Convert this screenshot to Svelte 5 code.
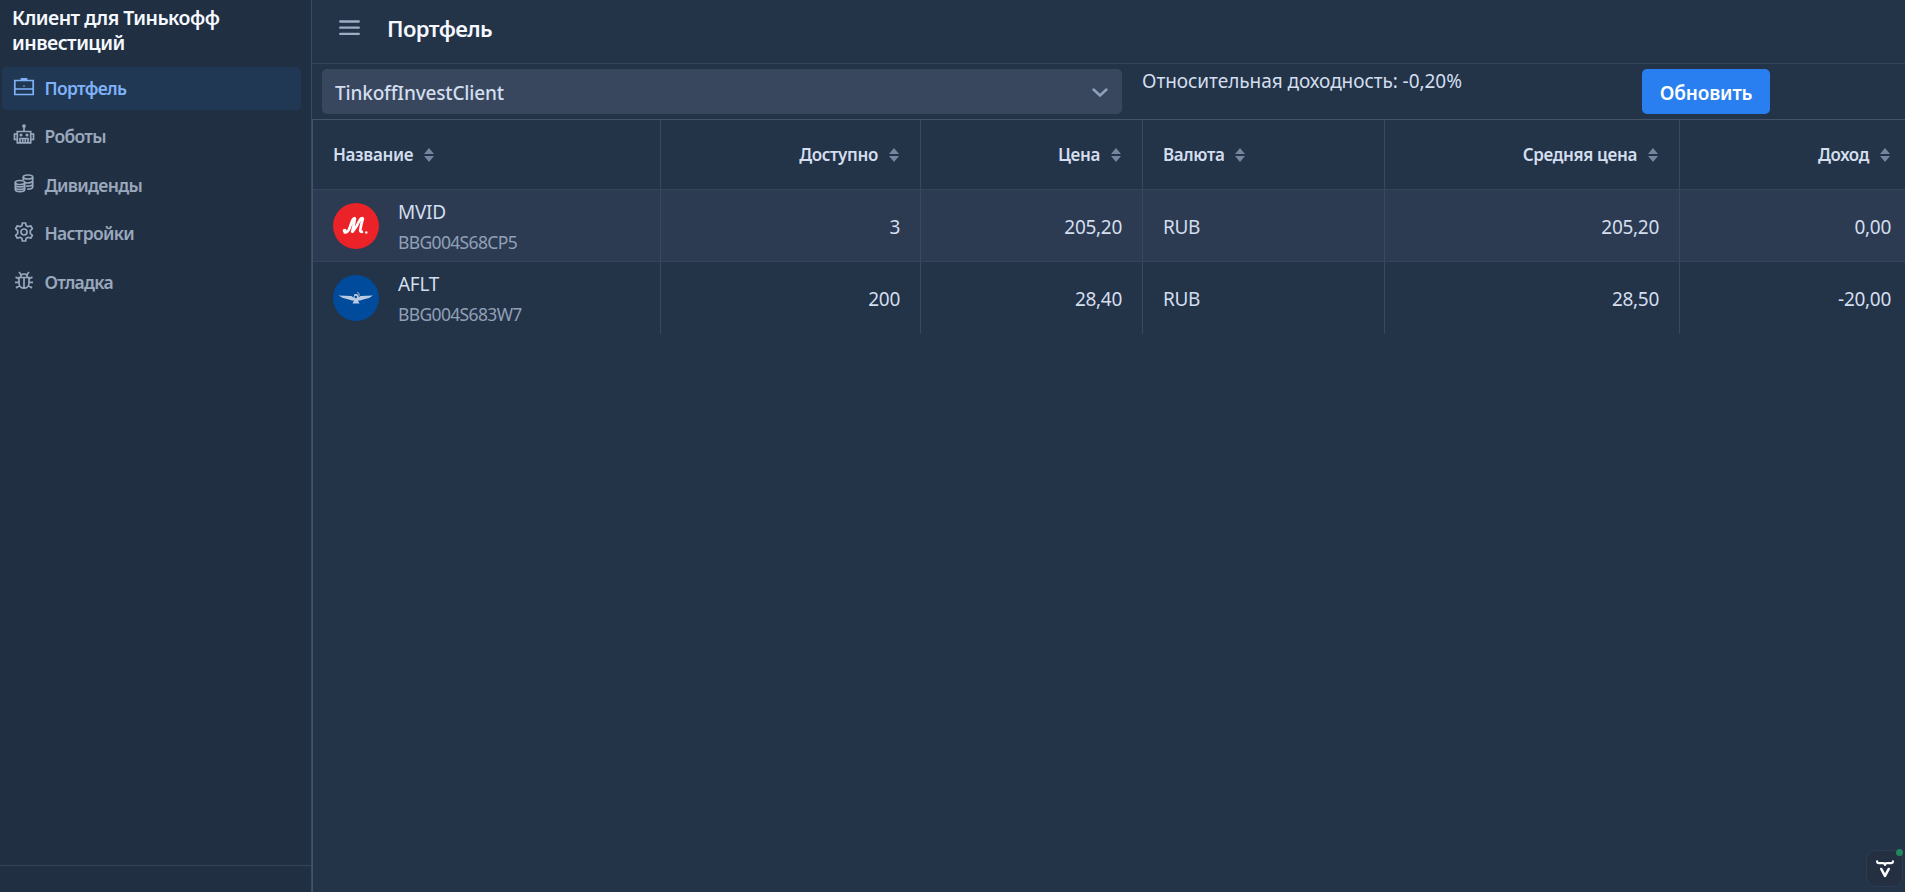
<script>
  const nav = [
    { label: 'Портфель', icon: 'case' },
    { label: 'Роботы', icon: 'robot' },
    { label: 'Дивиденды', icon: 'coins' },
    { label: 'Настройки', icon: 'cog' },
    { label: 'Отладка', icon: 'bug' },
  ];
  const columns = [
    { title: 'Название' },
    { title: 'Доступно', end: true },
    { title: 'Цена', end: true },
    { title: 'Валюта' },
    { title: 'Средняя цена', end: true },
    { title: 'Доход', end: true },
  ];
  const rows = [
    { name: 'MVID', figi: 'BBG004S68CP5', logo: 'mvid', cells: ['3', '205,20', 'RUB', '205,20', '0,00'] },
    { name: 'AFLT', figi: 'BBG004S683W7', logo: 'aflt', cells: ['200', '28,40', 'RUB', '28,50', '-20,00'] },
  ];
</script>

<div class="app">
  <aside>
    <h1>Клиент для Тинькофф<br />инвестиций</h1>
    <nav>
      {#each nav as item, i}
        <a class:active={i === 0}>
          <svg width="22" height="22" viewBox="0 0 22 22" fill="none" stroke="currentColor" stroke-width="1.7">
            {#if item.icon === 'case'}
              <path d="M1.800 4.500h18.400v14H1.800zM1.800 13h18.400M8.500 4V2.800h5V4M10.500 10.200h1" />
            {:else if item.icon === 'robot'}
              <path d="M4.300 7.500h13.400v11.300H4.300zM3.800 10H1.500v5.500h2.300M18.200 10h2.300v5.500h-2.300M11 7V3M7 18.500v-4h8v4M9.700 15v3.500M12.300 15v3.500" />
              <circle cx="11" cy="2" r="1" fill="currentColor" /><circle cx="8" cy="11" r=".7" fill="currentColor" /><circle cx="14" cy="11" r=".7" fill="currentColor" />
            {:else if item.icon === 'coins'}
              <ellipse cx="15" cy="4" rx="4.700" ry="2" /><path d="M10.300 4v3M19.700 4v10c0 1.300-2 2.200-5.500 2.200M12 9.700c3.500.8 7.700-.2 7.700-2M13 13c3.500.5 6.700-.4 6.700-2" />
              <ellipse cx="7" cy="9.500" rx="4.700" ry="2" /><path d="M2.300 9.500v7c0 2.800 9.400 2.800 9.400 0v-7M2.300 12c0 2.600 9.400 2.600 9.400 0M2.300 14.500c0 2.600 9.400 2.600 9.400 0" />
            {:else if item.icon === 'cog'}
              <path stroke-linejoin="round" d="M9.400 2h3.200l.5 2.600 1.900 1.100 2.700-.9 1.700 2.900-2.100 1.900v2.800l2.100 1.900-1.700 2.900-2.700-.9-1.900 1.100-.5 2.600H9.400l-.5-2.600-1.900-1.100-2.700.9-1.700-2.900 2.100-1.900V9.600L2.600 7.700l1.700-2.900 2.700.9 1.900-1.100z" /><circle cx="11" cy="11" r="3" />
            {:else}
              <path d="M6 7.500h10v5.500c0 7-10 7-10 0zM7.500 7c.3-4 6.700-4 7 0M11 8v10M6 2l2 2.500M16 2l-2 2.500M6 9L2.500 7M16 9l3.500-2M6 12.300H2M16 12.300h4M6.500 15.500L3 18M15.500 15.500L19 18" />
            {/if}
          </svg>
          <span>{item.label}</span>
        </a>
      {/each}
    </nav>
    <footer></footer>
  </aside>
  <main>
    <header>
      <svg width="21" height="16" viewBox="0 0 21 16"><path d="M1.200 1.500h18.600M1.200 7.700h18.600M1.200 13.900h18.600" stroke="#9cadc5" stroke-width="2.300" stroke-linecap="round" /></svg>
      <h2>Портфель</h2>
    </header>
    <section class="toolbar">
      <div class="select"><span>TinkoffInvestClient</span>
        <svg width="16" height="10" viewBox="0 0 16 10"><path d="M1.500 1.500L8 7.500l6.500-6" fill="none" stroke="#90a1bb" stroke-width="2.400" stroke-linecap="round" /></svg>
      </div>
      <p>Относительная доходность: -0,20%</p>
      <button>Обновить</button>
    </section>
    <div class="grid">
      <div class="row head">
        {#each columns as c}
          <div class="cell" class:end={c.end}><span>{c.title}</span>
            <svg class="sort" width="10" height="14" viewBox="0 0 10 14"><path d="M0 6L5 0l5 6zM0 8h10l-5 6z" fill="#74859d" /></svg>
          </div>
        {/each}
      </div>
      {#each rows as r, i}
        <div class="row" class:odd={i === 0}>
          <div class="cell first">
            <svg width="46" height="46" viewBox="0 0 46 46">
              {#if r.logo === 'mvid'}
                <circle cx="23" cy="23" r="23" fill="#eb2227" />
                <path d="M11 29q3 1.500 5-2.500l3.500-9.500q1-2 2.500-2-1 7-3 14.500 5-6 7.500-12 1-2.500 3.500-2.500-1.500 5-2.800 12-.2 2.500 2.800 1.500" fill="none" stroke="#fff" stroke-width="2.700" stroke-linejoin="bevel" />
                <circle cx="11.700" cy="27.800" r="2" fill="#fff" /><circle cx="33.300" cy="29.500" r="1.200" fill="#fff" />
              {:else}
                <circle cx="23" cy="23" r="23" fill="#004b9b" />
                <path d="M5.500 20.500l13 .5 2 1.500 1-3.500 3 0 1 3.500 2-1.500 12.500-.5-4 2.500-4 1-5 1.500-2 0 1.500 3h-7l1.500-3-2 0-5-1.500-4-1z" fill="#b9cbe2" />
                <circle cx="22.800" cy="22" r="1.300" fill="#004b9b" /><path d="M24.500 17q3.500 3-.5 6.500" fill="none" stroke="#b9cbe2" />
              {/if}
            </svg>
            <div class="names"><b>{r.name}</b><small>{r.figi}</small></div>
          </div>
          {#each r.cells as v, j}
            <div class="cell" class:end={columns[j + 1].end}><span>{v}</span></div>
          {/each}
        </div>
      {/each}
    </div>
  </main>
  <div class="dev">
    <svg width="18" height="18" viewBox="0 0 18 18" fill="none" stroke="#fff" stroke-width="2.200" stroke-linecap="round" stroke-linejoin="round"><path d="M1.100 1.300v.5q0 1.300 1.300 1.300h4.600Q9 3.100 9 5 9 3.100 11 3.100h4.600q1.300 0 1.300-1.300v-.5" /><path stroke-width="2.600" d="M5.300 9L9 15.800 12.700 9" /></svg>
    <i></i>
  </div>
</div>

<style>
  :global(body) { margin: 0; overflow: hidden; }
  .app { display: flex; height: 892px; width: 1905px; overflow: hidden; background: #233348; color: #d3deee; font-family: "Noto Sans", "Open Sans", sans-serif; font-size: 19px; letter-spacing: -0.3px; position: relative; }
  * { box-sizing: border-box; }
  aside { width: 312px; border-right: 1px solid #3b4b62; background: #212f42; display: flex; flex-direction: column; }
  h1 { margin: 0; padding: 5px 0 0 12px; height: 67px; font-size: 19.5px; line-height: 25px; font-weight: 600; color: #f5f9ff; letter-spacing: -0.530px; white-space: nowrap; }
  nav { flex: 1; padding: 0 10px 0 2px; display: flex; flex-direction: column; gap: 5.600px; }
  nav a { height: 43px; flex: none; display: flex; align-items: center; gap: 10px; padding: 0 0 2px 10.500px; color: #99a8bd; font-size: 17.500px; font-weight: 600; letter-spacing: -0.700px; border-radius: 5px; }
  nav a svg { margin-top: -2px; }
  nav a.active { background: #213855; color: #7fb2f8; }
  footer { height: 27px; border-top: 1px solid #34445a; }
  main { flex: 1; min-width: 0; display: flex; flex-direction: column; }
  header { height: 64px; border-bottom: 1px solid #34445b; display: flex; align-items: flex-start; padding: 20px 0 0 27px; gap: 27px; }
  h2 { margin: 0; font-size: 22px; line-height: 30px; margin-top: -7px; font-weight: 600; color: #f5f9ff; letter-spacing: -0.600px; }
  .toolbar { height: 55px; padding: 5px 10px; display: flex; align-items: flex-start; }
  .select { width: 800px; height: 45px; border-radius: 5px; background: #38475e; display: flex; align-items: center; justify-content: space-between; padding: 3px 14px 0 13px; font-weight: 500; letter-spacing: -0.170px; }
  .toolbar p { margin: -1px 180px 0 20px; width: 320px; line-height: 26px; white-space: nowrap; letter-spacing: -0.050px; }
  button { width: 128px; height: 45px; border: 0; border-radius: 5px; background: #2a7ff0; color: #fff; font: 600 19px "Noto Sans", sans-serif; letter-spacing: -0.150px; padding: 3px 0 0; }
  .grid { border-top: 1px solid #43536a; border-left: 1px solid #43536a; flex: 1; }
  .row { display: grid; grid-template-columns: 348px 260px 222px 242px 295px 225px; height: 72px; }
  .row.head { height: 70px; border-bottom: 1px solid #34445b; font-size: 17px; font-weight: 600; letter-spacing: -0.350px; }
  .odd { background: #2c3b52; border-bottom: 1px solid #34445b; }
  .cell { display: flex; align-items: center; padding: 2px 20px 0 20px; border-right: 1px solid #38485f; }
  .cell.end { justify-content: flex-end; }
  .head .cell { padding-top: 0; }
  .cell:last-child { border-right: 0; padding-right: 14px; }
  .cell.first { gap: 19px; padding: 0 0 0 20px; }
  .sort { margin-left: 11px; }
  .head .end .sort { margin-right: 1px; }
  .names { display: flex; flex-direction: column; padding-top: 2px; }
  b { font-weight: 400; line-height: 30px; }
  small { font-size: 17.500px; line-height: 30px; color: #91a0b6; letter-spacing: -0.650px; }
  .dev { position: absolute; left: 1866px; top: 850px; width: 37px; height: 37px; border-radius: 10px; background: #242f41; border: 1px solid #2d3c50; padding: 9px; }
  .dev svg { display: block; }
  .dev i { position: absolute; right: -1px; top: -2px; width: 7px; height: 7px; border-radius: 50%; background: #24845b; }
</style>
